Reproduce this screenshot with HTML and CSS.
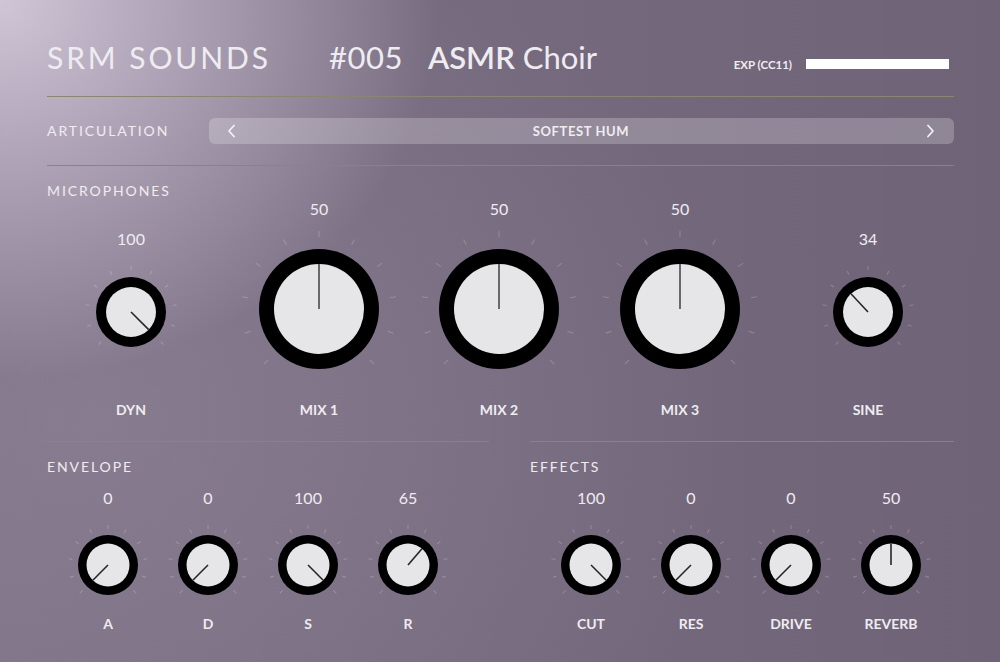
FILE: index.html
```html
<!DOCTYPE html>
<html lang="en">
<head>
  <meta charset="UTF-8">
  <title>SRM Sounds - ASMR Choir</title>
  <link rel="stylesheet" href="styles.css">
</head>
<body>
<div class="panel">

  <!-- HEADER -->
  <header class="top">
    <h1 class="brand">SRM SOUNDS</h1>
    <div class="patch"><span class="num">#005</span><span class="name"><b>ASMR</b> Choir</span></div>
    <div class="exp">
      <span class="exp-label">EXP (CC11)</span>
      <span class="exp-bar"></span>
    </div>
  </header>

  <!-- ARTICULATION -->
  <section class="artic">
    <div class="section-title artic-title">ARTICULATION</div>
    <div class="selector">
      <svg class="chev" viewBox="0 0 10 14" width="10" height="14"><polyline points="7,1.5 2,7 7,12.5"/></svg>
      <span class="selector-text">SOFTEST HUM</span>
      <svg class="chev" viewBox="0 0 10 14" width="10" height="14"><polyline points="3,1.5 8,7 3,12.5"/></svg>
    </div>
  </section>

  <!-- MICROPHONES -->
  <section class="mics">
    <div class="section-title">MICROPHONES</div>
    <div class="mic-row">
      <div class="knob knob-md">
        <div class="value">100</div>
        <svg class="dial" viewBox="-50 -50 100 100" width="100" height="100">
          <defs>
            <g id="ticks-lg">
              <line y1="-72" y2="-78" transform="rotate(-135)"/><line y1="-72" y2="-78" transform="rotate(-108)"/>
              <line y1="-72" y2="-78" transform="rotate(-81)"/><line y1="-72" y2="-78" transform="rotate(-54)"/>
              <line y1="-72" y2="-78" transform="rotate(-27)"/><line y1="-72" y2="-78"/>
              <line y1="-72" y2="-78" transform="rotate(27)"/><line y1="-72" y2="-78" transform="rotate(54)"/>
              <line y1="-72" y2="-78" transform="rotate(81)"/><line y1="-72" y2="-78" transform="rotate(108)"/>
              <line y1="-72" y2="-78" transform="rotate(135)"/>
            </g>
            <g id="ticks-md">
              <line y1="-42" y2="-46" transform="rotate(-135)"/><line y1="-42" y2="-46" transform="rotate(-108)"/>
              <line y1="-42" y2="-46" transform="rotate(-81)"/><line y1="-42" y2="-46" transform="rotate(-54)"/>
              <line y1="-42" y2="-46" transform="rotate(-27)"/><line y1="-42" y2="-46"/>
              <line y1="-42" y2="-46" transform="rotate(27)"/><line y1="-42" y2="-46" transform="rotate(54)"/>
              <line y1="-42" y2="-46" transform="rotate(81)"/><line y1="-42" y2="-46" transform="rotate(108)"/>
              <line y1="-42" y2="-46" transform="rotate(135)"/>
            </g>
            <g id="ticks-sm">
              <line y1="-36" y2="-40" transform="rotate(-135)"/><line y1="-36" y2="-40" transform="rotate(-108)"/>
              <line y1="-36" y2="-40" transform="rotate(-81)"/><line y1="-36" y2="-40" transform="rotate(-54)"/>
              <line y1="-36" y2="-40" transform="rotate(-27)"/><line y1="-36" y2="-40"/>
              <line y1="-36" y2="-40" transform="rotate(27)"/><line y1="-36" y2="-40" transform="rotate(54)"/>
              <line y1="-36" y2="-40" transform="rotate(81)"/><line y1="-36" y2="-40" transform="rotate(108)"/>
              <line y1="-36" y2="-40" transform="rotate(135)"/>
            </g>
          </defs>
          <use href="#ticks-md" class="ticks"/>
          <circle class="ring" r="35"/><circle class="cap" r="25"/>
          <line class="needle" y2="-25" transform="rotate(135)"/>
        </svg>
        <div class="label">DYN</div>
      </div>
      <div class="knob knob-lg">
        <div class="value">50</div>
        <svg class="dial" viewBox="-80 -80 160 160" width="160" height="160">
          <use href="#ticks-lg" class="ticks"/>
          <circle class="ring" r="60"/><circle class="cap" r="45"/>
          <line class="needle needle-lg" y2="-45"/>
        </svg>
        <div class="label">MIX 1</div>
      </div>
      <div class="knob knob-lg">
        <div class="value">50</div>
        <svg class="dial" viewBox="-80 -80 160 160" width="160" height="160">
          <use href="#ticks-lg" class="ticks"/>
          <circle class="ring" r="60"/><circle class="cap" r="45"/>
          <line class="needle needle-lg" y2="-45"/>
        </svg>
        <div class="label">MIX 2</div>
      </div>
      <div class="knob knob-lg">
        <div class="value">50</div>
        <svg class="dial" viewBox="-80 -80 160 160" width="160" height="160">
          <use href="#ticks-lg" class="ticks"/>
          <circle class="ring" r="60"/><circle class="cap" r="45"/>
          <line class="needle needle-lg" y2="-45"/>
        </svg>
        <div class="label">MIX 3</div>
      </div>
      <div class="knob knob-md">
        <div class="value">34</div>
        <svg class="dial" viewBox="-50 -50 100 100" width="100" height="100">
          <use href="#ticks-md" class="ticks"/>
          <circle class="ring" r="35"/><circle class="cap" r="25"/>
          <line class="needle" y2="-25" transform="rotate(-43)"/>
        </svg>
        <div class="label">SINE</div>
      </div>
    </div>
  </section>

  <!-- ENVELOPE + EFFECTS -->
  <div class="bottom">
    <section class="group">
      <div class="section-title">ENVELOPE</div>
      <div class="small-row">
        <div class="knob">
          <div class="value">0</div>
          <svg class="dial" viewBox="-42 -42 84 84" width="84" height="84">
            <use href="#ticks-sm" class="ticks"/>
            <circle class="ring" r="30"/><circle class="cap" r="21.5"/>
            <line class="needle" y2="-21.5" transform="rotate(-135)"/>
          </svg>
          <div class="label">A</div>
        </div>
        <div class="knob">
          <div class="value">0</div>
          <svg class="dial" viewBox="-42 -42 84 84" width="84" height="84">
            <use href="#ticks-sm" class="ticks"/>
            <circle class="ring" r="30"/><circle class="cap" r="21.5"/>
            <line class="needle" y2="-21.5" transform="rotate(-135)"/>
          </svg>
          <div class="label">D</div>
        </div>
        <div class="knob">
          <div class="value">100</div>
          <svg class="dial" viewBox="-42 -42 84 84" width="84" height="84">
            <use href="#ticks-sm" class="ticks"/>
            <circle class="ring" r="30"/><circle class="cap" r="21.5"/>
            <line class="needle" y2="-21.5" transform="rotate(135)"/>
          </svg>
          <div class="label">S</div>
        </div>
        <div class="knob">
          <div class="value">65</div>
          <svg class="dial" viewBox="-42 -42 84 84" width="84" height="84">
            <use href="#ticks-sm" class="ticks"/>
            <circle class="ring" r="30"/><circle class="cap" r="21.5"/>
            <line class="needle" y2="-21.5" transform="rotate(40.5)"/>
          </svg>
          <div class="label">R</div>
        </div>
      </div>
    </section>

    <section class="group">
      <div class="section-title">EFFECTS</div>
      <div class="small-row">
        <div class="knob">
          <div class="value">100</div>
          <svg class="dial" viewBox="-42 -42 84 84" width="84" height="84">
            <use href="#ticks-sm" class="ticks"/>
            <circle class="ring" r="30"/><circle class="cap" r="21.5"/>
            <line class="needle" y2="-21.5" transform="rotate(135)"/>
          </svg>
          <div class="label">CUT</div>
        </div>
        <div class="knob">
          <div class="value">0</div>
          <svg class="dial" viewBox="-42 -42 84 84" width="84" height="84">
            <use href="#ticks-sm" class="ticks"/>
            <circle class="ring" r="30"/><circle class="cap" r="21.5"/>
            <line class="needle" y2="-21.5" transform="rotate(-135)"/>
          </svg>
          <div class="label">RES</div>
        </div>
        <div class="knob">
          <div class="value">0</div>
          <svg class="dial" viewBox="-42 -42 84 84" width="84" height="84">
            <use href="#ticks-sm" class="ticks"/>
            <circle class="ring" r="30"/><circle class="cap" r="21.5"/>
            <line class="needle" y2="-21.5" transform="rotate(-135)"/>
          </svg>
          <div class="label">DRIVE</div>
        </div>
        <div class="knob">
          <div class="value">50</div>
          <svg class="dial" viewBox="-42 -42 84 84" width="84" height="84">
            <use href="#ticks-sm" class="ticks"/>
            <circle class="ring" r="30"/><circle class="cap" r="21.5"/>
            <line class="needle" y2="-21.5"/>
          </svg>
          <div class="label">REVERB</div>
        </div>
      </div>
    </section>
  </div>

</div>
</body>
</html>
```

FILE: styles.css
```css
body {
  margin: 0;
  font-family: Lato, "Open Sans", sans-serif;
  color: #efecf1;
}
.panel {
  width: 1000px;
  height: 662px;
  box-sizing: border-box;
  padding: 0 46px 0 47px;
  overflow: hidden;
  background:
    radial-gradient(ellipse 440px 380px at 0 0, rgba(228, 218, 235, 0.8), rgba(200, 190, 210, 0) 100%),
    radial-gradient(ellipse 650px 520px at 100px 420px, rgba(165, 155, 170, 0.3), rgba(165, 155, 170, 0) 100%),
    linear-gradient(to right, #7c7085, #6f6378);
}

/* header */
.top {
  height: 97px;
  box-sizing: border-box;
  padding: 39px 5px 0 0;
  display: flex;
  align-items: baseline;
  border-bottom: 1px solid #8b8672;
}
.brand {
  margin: 0;
  font-size: 30px;
  font-weight: 400;
  line-height: 36px;
  letter-spacing: 2.9px;
}
.patch {
  margin-left: 58px;
  font-size: 31px;
  line-height: 36px;
}
.patch .num {
  margin-right: 25px;
  letter-spacing: 0.5px;
}
.patch b {
  font-weight: 600;
}
.exp {
  margin-left: auto;
  display: flex;
  align-items: baseline;
  gap: 14px;
}
.exp-label {
  font-size: 11.5px;
  font-weight: 700;
}
.exp-bar {
  display: block;
  width: 143px;
  height: 10px;
  background: #fff;
}

/* section titles */
.section-title {
  font-size: 14px;
  line-height: 16px;
  letter-spacing: 1.9px;
}

/* articulation */
.artic {
  height: 69px;
  box-sizing: border-box;
  display: flex;
  align-items: center;
  border-bottom: 1px solid #8b8672;
}
.artic-title {
  flex: 0 0 162px;
}
.selector {
  flex: 1;
  height: 26px;
  box-sizing: border-box;
  padding: 0 19px 0 18px;
  display: flex;
  align-items: center;
  justify-content: space-between;
  border-radius: 6px;
  background: rgba(255, 255, 255, 0.22);
}
.selector-text {
  font-size: 13px;
  font-weight: 700;
  letter-spacing: 0.6px;
}
.chev polyline {
  fill: none;
  stroke: #f2f0f4;
  stroke-width: 1.8;
  stroke-linecap: round;
  stroke-linejoin: round;
}

/* knobs */
.knob {
  display: flex;
  flex-direction: column;
  align-items: center;
}
.value {
  font-size: 16px;
  line-height: 20px;
}
.label {
  margin-top: auto;
  font-size: 14px;
  font-weight: 700;
  line-height: 18px;
}
.dial {
  display: block;
}
.ticks {
  stroke: rgba(255, 255, 255, 0.2);
  stroke-width: 1.1;
}
.ring {
  fill: #000;
}
.cap {
  fill: #e6e6e8;
}
.needle {
  stroke: #262626;
  stroke-width: 1.6;
}
.needle-lg {
  stroke: #4a4a4a;
}

/* microphones */
.mics {
  padding: 17px 0 22px;
}
.mic-row {
  display: grid;
  grid-template-columns: 184px 192px 168px 194px 1fr;
  margin: 0 -5px 0 -8px;
  height: 220px;
}
.knob-lg .dial {
  margin-top: 10px;
}
.knob-md {
  padding-top: 30px;
}
.knob-md .dial {
  margin-top: 13px;
}

/* envelope + effects */
.bottom {
  display: grid;
  grid-template-columns: 442px 1fr;
  column-gap: 41px;
}
.group {
  border-top: 1px solid #8b8672;
  padding-top: 17px;
}
.small-row {
  display: grid;
  grid-template-columns: repeat(4, 100px);
  padding-left: 11px;
  margin-top: 13px;
}
.small-row .dial {
  margin-top: 15px;
}
.small-row .label {
  margin-top: 8px;
}
```
